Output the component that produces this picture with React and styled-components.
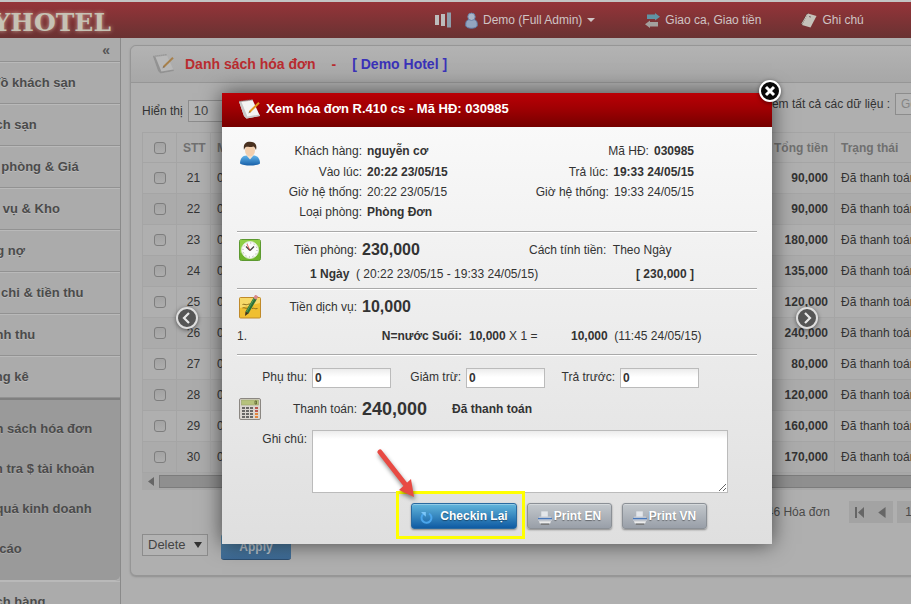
import styled, { createGlobalStyle, css } from 'styled-components';

const GlobalStyle = createGlobalStyle`
  * {
    box-sizing: border-box;
  }
  body {
    margin: 0;
    background: #afafaf;
    color: #333;
    font: 12px/20px "Liberation Sans", Arial, sans-serif;
    overflow: hidden;
  }
  button, input, select, textarea {
    font: inherit;
    color: inherit;
  }
`;

/* ---------- page ---------- */

const Viewport = styled.div`
  position: relative;
  min-height: 100vh;
  overflow: hidden;
`;

// the admin page is wider than the window on both sides
const Shell = styled.div`
  margin: 0 -100px 0 -40px;
`;

const TopBar = styled.header`
  display: flex;
  align-items: center;
  height: 38px;
  border-top: 2px solid #c4c4c4;
  background: linear-gradient(#953439, #693232);
  color: #cfc4c4;
`;

const Logo = styled.div`
  display: flex;
  justify-content: flex-end;
  width: 151px;
  font: bold 25px/34px "DejaVu Serif", serif;
  color: #c6c2b4;
  text-shadow: 0 0 4px #c9a99a;
  padding-top: 6px;
`;

const TopNav = styled.nav`
  display: flex;
  align-items: center;
  margin-left: 324px;
`;

const TopLink = styled.a`
  display: flex;
  align-items: center;
  gap: 5px;
  margin-right: ${(props) => props.$gap || 0}px;
  color: inherit;
  text-decoration: none;
`;

const Columns = styled.div`
  display: flex;
  align-items: stretch;
`;

const Sidebar = styled.aside`
  flex: none;
  width: 161px;
  border-right: 1px solid #8a8a8a;
  background: #ababab;
`;

const Collapse = styled.button`
  display: block;
  width: 100%;
  height: 24px;
  padding: 0 10px 0 0;
  border: 0;
  border-bottom: 1px solid #929292;
  background: none;
  text-align: right;
  font-size: 14px;
  font-weight: bold;
  color: #555;
`;

const menuText = css`
  display: block;
  padding-left: 11px;
  font-size: 13px;
  font-weight: bold;
  color: #4b4b4b;
  text-decoration: none;
  white-space: nowrap;
  text-shadow: 0 1px 0 #bcbcbc;
`;

const MenuItem = styled.a`
  ${menuText}
  height: 42px;
  line-height: 40px;
  border-top: 1px solid #b9b9b9;
  border-bottom: 1px solid #929292;
`;

const SubMenu = styled.div`
  padding: 9px 0 11px;
  border-top: 2px solid #808080;
  border-bottom: 1px solid #b9b9b9;
  border-radius: 0 0 5px 0;
  background: #9a9a9a;
`;

const SubItem = styled.a`
  ${menuText}
  line-height: 40px;
  text-shadow: 0 1px 0 #aaa;
`;

const Main = styled.main`
  flex: 1;
  padding: 7px 10px 29px 9px;
`;

const Panel = styled.section`
  border: 1px solid #969696;
  border-radius: 6px;
  box-shadow: 0 1px 2px #8f8f8f;
  background: #afafaf;
`;

const PanelHead = styled.div`
  display: flex;
  align-items: center;
  height: 37px;
  padding-left: 21px;
  border-bottom: 1px solid #969696;
  border-radius: 6px 6px 0 0;
  background: linear-gradient(#b3b3b3, #a7a7a7);
`;

const PanelTitle = styled.h1`
  display: flex;
  gap: 16px;
  margin: 0 0 0 10px;
  font-size: 14px;
  color: #b92c30;

  b {
    color: #3a32b8;
  }
`;

const PanelBody = styled.div`
  padding: 11px 11px 15px;
`;

const Toolbar = styled.div`
  display: flex;
  justify-content: space-between;
  height: 38px;
`;

const ToolGroup = styled.label`
  display: flex;
  align-items: center;
  gap: 5px;
  height: ${(props) => props.$height}px;
`;

const SelectWrap = styled.span`
  position: relative;
  display: inline-block;

  svg {
    position: absolute;
    right: 6px;
    top: 7px;
    pointer-events: none;
  }
`;

const Select = styled.select`
  appearance: none;
  width: ${(props) => props.$width}px;
  height: 22px;
  padding: 0 5px;
  border: 1px solid #8c8c8c;
  border-radius: 0;
  background: #b3b3b3;
  color: #444;
  font-size: 13px;
`;

const SearchInput = styled.input`
  width: 94px;
  height: 22px;
  padding: 0 5px;
  border: 1px solid #8c8c8c;
  background: #b3b3b3;

  &::placeholder {
    color: #858585;
  }
`;

const InvoiceTable = styled.table`
  width: 100%;
  table-layout: fixed;
  border-collapse: collapse;
  border: 1px solid #959595;

  th, td {
    height: 31px;
    padding: 0 6px;
    border: 1px solid #a5a5a5;
    text-align: left;
    white-space: nowrap;
    overflow: hidden;
  }
  th {
    height: 30px;
    color: #707070;
  }
  tbody tr:nth-child(even) {
    background: #ababab;
  }
`;

const Col = styled.col`
  width: ${(props) => props.$width}px;
`;

const Cell = styled.td`
  && {
    text-align: ${(props) => props.$align || 'left'};
    font-weight: ${(props) => (props.$bold ? 'bold' : 'inherit')};
  }
`;

const Tick = styled.input.attrs({ type: 'checkbox' })`
  appearance: none;
  display: block;
  width: 12px;
  height: 12px;
  margin: 0 auto;
  border: 1px solid #7e7e7e;
  border-radius: 3px;
  background: linear-gradient(#a3a3a3, #adadad);
`;

const ScrollTrack = styled.div`
  display: flex;
  align-items: center;
  gap: 3px;
  height: 17px;
  padding-left: 5px;
  background: #a8a8a8;
`;

const ScrollThumb = styled.div`
  flex: 1;
  height: 13px;
  border: 1px solid #7c7c7c;
  background: #8f8f8f;
`;

const Pager = styled.div`
  display: flex;
  justify-content: flex-end;
  align-items: center;
  gap: 4px;
  padding-top: 11px;
  color: #4a4a4a;
`;

const PagerInfo = styled.span`
  margin-right: 15px;
`;

const PagerGroup = styled.div`
  display: flex;
  width: ${(props) => props.$width}px;
  height: 22px;
  background: #a3a3a3;
`;

const PagerButton = styled.button`
  display: flex;
  align-items: center;
  justify-content: center;
  flex: 1;
  padding: 0;
  border: 0;
  background: none;
`;

const BulkActions = styled.div`
  display: flex;
  gap: 13px;
  padding-top: 11px;
`;

const ApplyButton = styled.button`
  width: 70px;
  height: 26px;
  border: 0;
  border-bottom: 1px solid #2d4f70;
  border-radius: 3px;
  background: linear-gradient(#5687a6, #3d6a96);
  color: #b9c3cc;
  font-weight: bold;
`;

/* ---------- dialog ---------- */

const Overlay = styled.div`
  position: absolute;
  inset: 0;
  display: flex;
  justify-content: center;
  align-items: flex-start;
  padding: 93px 0 0 83px;
`;

const Dialog = styled.div`
  position: relative;
  width: 550px;
  box-shadow: 0 0 20px rgba(0, 0, 0, 0.6);
  background: linear-gradient(#fbfbfb, #dfdfdf);
`;

const DialogHead = styled.div`
  display: flex;
  align-items: center;
  gap: 5px;
  height: 34px;
  padding: 0 16px 2px;
  background: linear-gradient(#ba0006, #a00003 45%, #760000);
  color: #fff;
`;

const DialogTitle = styled.h2`
  margin: 0;
  font-size: 13px;
`;

const RoundButton = styled.button`
  position: absolute;
  width: 24px;
  height: 24px;
  padding: 0;
  border: 0;
  border-radius: 50%;
  background: none;
  filter: drop-shadow(0 1px 2px rgba(0, 0, 0, 0.5));
  ${(props) => props.$at}

  svg {
    display: block;
  }
`;

const Form = styled.form`
  padding: 0 15px 15px;
`;

const Block = styled.div`
  padding: ${(props) => props.$pad};
  border-bottom: 1px solid #a9a9a9;
  box-shadow: 0 1px 0 #fff;
  margin-bottom: 1px;
`;

const Guest = styled.div`
  display: grid;
  grid-template-columns: 26px 1fr auto;
  padding-right: 63px;
`;

const Details = styled.dl`
  margin: 0;
`;

const Detail = styled.div`
  display: flex;
  gap: 5px;
  ${(props) => props.$right && 'justify-content: flex-end;'}

  &:first-child {
    padding-bottom: 1px;
  }
  dt {
    width: ${(props) => (props.$right ? 'auto' : '99px')};
    text-align: right;
  }
  dd {
    margin: 0;
    font-weight: ${(props) => (props.$plain ? 'normal' : 'bold')};
  }
`;

const IconSlot = styled.span`
  flex: none;
  width: 26px;
  padding-left: 2px;

  svg {
    display: block;
  }
`;

const Row = styled.div`
  display: flex;
  align-items: center;
  height: ${(props) => props.$height || 22}px;
  padding-left: ${(props) => props.$indent || 0}px;
  padding-right: ${(props) => props.$inset || 0}px;
  margin-top: ${(props) => props.$top || 0}px;
  white-space: pre;
`;

const RowLabel = styled.span`
  width: 94px;
  margin-right: 5px;
  text-align: right;
`;

const Amount = styled.strong`
  flex: ${(props) => (props.$fit ? 'none' : 1)};
  font-size: ${(props) => props.$size || 16}px;
`;

const Status = styled.strong`
  margin-left: 25px;
`;

const Method = styled.span`
  width: 228px;
`;

const Push = styled.strong`
  margin-left: auto;
`;

const ServiceRow = styled.div`
  display: grid;
  grid-template-columns: 20px 205px 109px 1fr;
  padding: 6px 0 1px;
  white-space: pre;
`;

const ServiceName = styled.strong`
  text-align: right;
`;

const ServiceQty = styled.span`
  padding-left: 7px;
`;

const Fees = styled.div`
  display: flex;
  padding-top: 12px;
`;

const Field = styled.label`
  display: grid;
  grid-template-columns: 70px ${(props) => props.$width}px;
  column-gap: 5px;
  line-height: 18px;
  margin-top: ${(props) => props.$top || 0}px;

  span {
    text-align: right;
  }
`;

const inputLook = css`
  border: 1px solid #bbb;
  border-radius: 0;
  background: linear-gradient(#ececec, #fff 8px);
`;

const MoneyInput = styled.input`
  ${inputLook}
  width: 100%;
  height: 20px;
  padding: 0 2px;
  font-weight: bold;
`;

const Note = styled.textarea`
  ${inputLook}
  display: block;
  width: 100%;
  height: 63px;
`;

const Actions = styled.div`
  display: flex;
  gap: 10px;
  padding: 10px 50px 0 0;
  justify-content: flex-end;
`;

const ActionButton = styled.button`
  display: flex;
  align-items: center;
  justify-content: center;
  gap: ${(props) => (props.$primary ? 7 : 2)}px;
  width: ${(props) => (props.$primary ? 106 : 85)}px;
  height: 26px;
  padding: 0;
  border: 1px solid ${(props) => (props.$primary ? '#2a6aa0' : '#8b9096')};
  border-radius: 3px;
  background: ${(props) =>
    props.$primary ? 'linear-gradient(#62b6dc, #0f5ba3)' : 'linear-gradient(#c3c8cc, #999fa8)'};
  box-shadow: 0 1px 2px rgba(0, 0, 0, 0.4), inset 0 1px 0 rgba(255, 255, 255, 0.3);
  color: #fff;
  font-weight: bold;
  white-space: nowrap;
  text-shadow: 0 1px 1px rgba(0, 0, 0, 0.4);
`;

const Highlight = styled.div`
  position: absolute;
  left: 174px;
  bottom: 5px;
  width: 129px;
  height: 48px;
  border: 3px solid #ff0;
  pointer-events: none;
`;

const Pointer = styled.svg`
  position: absolute;
  left: 150px;
  bottom: 45px;
  pointer-events: none;
  filter: drop-shadow(1px 3px 2px rgba(0, 0, 0, 0.45));
`;

/* ---------- icons ---------- */

const NoteIcon = ({ dim }) => (
  <svg width="23" height="20" viewBox="0 0 23 20" opacity={dim ? 0.75 : 1} aria-hidden="true">
    <path d="M1 2.500 14.500.8 22 17 8.500 19.500 6 17z" fill={dim ? '#bdbdbd' : '#f4f4f4'} />
    <path d="M1 2.500 6 17l2.500 2.500L22 17l-.6-1.500-12 2L3.500 3z" fill={dim ? '#8a8a8a' : '#c8c8c8'} />
    <path d="M1.500 2.500 14.500.8" stroke="#777" strokeWidth="1.500" strokeDasharray="1 1" />
    <path d="M21 3.800 11.500 13" stroke={dim ? '#a5712a' : '#e39a1d'} strokeWidth="2" />
    <path d="m11.900 12.200-1.900 2.400 2.600-1.500z" fill="#5a4630" />
  </svg>
);

const GuestIcon = () => (
  <svg width="22" height="25" viewBox="0 0 22 25" aria-hidden="true">
    <defs>
      <linearGradient id="shirt" x1="0" y1="0" x2="0" y2="1">
        <stop offset="0" stopColor="#62b4ea" />
        <stop offset="1" stopColor="#175fa8" />
      </linearGradient>
    </defs>
    <path d="M1 22.500c0-5 2.500-8 6.500-8h7c4 0 6.500 3 6.500 8-4 2.800-16 2.800-20 0z" fill="url(#shirt)" />
    <path d="M7.500 14.500 11 18.500l3.500-4-1-2h-5z" fill="#f6e2cf" />
    <ellipse cx="11" cy="9.500" rx="5" ry="6" fill="#f3cfae" />
    <path d="M5 9C4 3.500 6.500.8 11 .8s7.500 2.500 6 8.200c-.8-2-1.500-3-2.500-3.600C11 6.500 8 5.500 7 6 6 6.500 5.500 7.500 5 9z" fill="#49301f" />
  </svg>
);

const ClockIcon = () => (
  <svg width="22" height="22" viewBox="0 0 22 22" aria-hidden="true">
    <rect x=".5" y=".5" width="21" height="21" rx="2" fill="#6fb52c" stroke="#5c9930" />
    <path d="M1 1h20v7L1 14z" fill="#8ecf45" />
    <circle cx="11" cy="11" r="8.500" fill="#fcfcfc" stroke="#dbe8cd" />
    <circle cx="11" cy="11" r="7" fill="none" stroke="#999" strokeWidth="1" strokeDasharray="1 2.665" />
    <path d="m11 11.500-4-4M11 11.500l4-4" stroke="#444" strokeWidth="1.300" />
    <path d="M11 11.500 8 5" stroke="#d33" strokeWidth=".8" />
  </svg>
);

const MemoIcon = () => (
  <svg width="22" height="24" viewBox="0 0 22 24" aria-hidden="true">
    <rect x=".5" y="2.500" width="21" height="20.500" rx="1" fill="#f0bf30" stroke="#c08a2a" />
    <path d="M1 3h20v5L1 13z" fill="#f7d968" />
    <path d="M3.500 9.500c2-1 3 1 5 0s3 0 4 0M3.500 13c2-1 3 1 5 0M13 13.500c2-1 3 1 5.500 0" stroke="#8d6d1c" fill="none" />
    <path d="M16.500 3 8 17.500" stroke="#2c7039" strokeWidth="3.500" />
    <path d="M15.500 3 7.500 17" stroke="#57a055" strokeWidth="1" />
    <path d="m17.800.5-2 3.300" stroke="#d98a8a" strokeWidth="3.500" />
    <path d="M6.500 16.500 6 21l3.600-2.700z" fill="#3c3220" />
  </svg>
);

const CalculatorIcon = () => (
  <svg width="22" height="22" viewBox="0 0 22 22" aria-hidden="true">
    <rect x=".5" y=".5" width="21" height="21" rx="1.500" fill="#dbd6d0" stroke="#8b8782" />
    <rect x="2.500" y="2" width="17" height="5" fill="#b6c27c" stroke="#99a269" strokeWidth=".6" />
    <path d="M16 3h1.500v3H16z" fill="none" stroke="#58612f" strokeWidth=".8" />
    {[9, 12, 15, 18].map((y) =>
      [3, 7, 11, 16].map((x) => (
        <rect
          key={`${x}-${y}`}
          x={x}
          y={y}
          width="3"
          height="2"
          fill={x === 16 ? (y > 14 ? '#e3843c' : '#b8574f') : '#6a6866'}
        />
      ))
    )}
  </svg>
);

const BarsIcon = () => (
  <svg width="17" height="16" viewBox="0 0 17 16" aria-hidden="true">
    <path d="M0 3h4v10H0zM6 2h4v12H6z" fill="#bcbcbc" />
    <path d="M12 .5h4v15h-4z" fill="#8f9eab" />
  </svg>
);

const PersonIcon = () => (
  <svg width="13" height="17" viewBox="0 0 13 17" aria-hidden="true">
    <path d="M.8 14C.3 10 1.500 8 4 7.500h5c2.500.5 3.700 2.500 3.200 6.500-1.700 3-9.700 3-11.400 0z" fill="#93a5c0" stroke="#5f7ba6" />
    <circle cx="6.500" cy="4.800" r="3.700" fill="#a9b5c7" stroke="#6b83a9" />
  </svg>
);

const SwapIcon = () => (
  <svg width="15" height="15" viewBox="0 0 15 15" aria-hidden="true">
    <path d="M2 1.500h8V0l5 3.800-5 3.700V6H2z" fill="#6093a4" />
    <path d="M13 9H5V7.500l-5 3.700L5 15v-1.500h8z" fill="#a3a09d" />
  </svg>
);

const BookIcon = () => (
  <svg width="16" height="15" viewBox="0 0 16 15" aria-hidden="true">
    <path d="M6 0 0 10.500 1.500 13 8 2z" fill="#5d3d37" />
    <path d="m7 .5 8.500 2.500-6 11.500L1 12z" fill="#c5c2ba" />
    <path d="M6.500 1 .8 11" stroke="#c5c2ba" />
    <path d="m8 3.500 2 .6" stroke="#766" />
  </svg>
);

const Triangle = ({ left, size = 9, color = '#333' }) => (
  <svg width={size} height={size} viewBox="0 0 9 9" aria-hidden="true">
    <path d={left ? 'M7 0v9L1 4.500z' : 'M0 1h9L4.500 8z'} fill={color} />
  </svg>
);

const CaretIcon = () => (
  <svg width="8" height="4" viewBox="0 0 8 4" aria-hidden="true">
    <path d="M0 0h8L4 4z" fill="#cfc4c4" />
  </svg>
);

const FirstIcon = () => (
  <svg width="10" height="11" viewBox="0 0 10 11" aria-hidden="true">
    <path d="M0 0h2v11H0zM9 0v11L3 5.500z" fill="#666" />
  </svg>
);

const CloseIcon = () => (
  <svg width="24" height="24" viewBox="0 0 24 24" aria-hidden="true">
    <circle cx="12" cy="12" r="10" fill="#080808" stroke="#fff" strokeWidth="2" />
    <path d="m8 8 8 8m0-8-8 8" stroke="#fff" strokeWidth="3" />
  </svg>
);

const ChevronIcon = ({ next }) => (
  <svg width="24" height="24" viewBox="0 0 24 24" aria-hidden="true">
    <circle cx="12" cy="12" r="10" fill="#555" stroke="#dedede" strokeWidth="2" />
    <path d={next ? 'm10 7 5 5-5 5' : 'm14 7-5 5 5 5'} fill="none" stroke="#e8e8e8" strokeWidth="2.200" />
  </svg>
);

const ReloadIcon = () => (
  <svg width="13" height="17" viewBox="1 -2 13 17" aria-hidden="true">
    <path d="M10 3.500a5 5 0 1 1-5.500.3" fill="none" stroke="#4ba6ec" strokeWidth="2" />
    <path d="M2 2h4.800v4.800z" fill="#7cc6f8" />
  </svg>
);

const PrinterIcon = () => (
  <svg width="14" height="19" viewBox="0 -4 15 19" aria-hidden="true">
    <path d="M3.500 0h7v6h-7z" fill="#e4e7eb" />
    <path d="M1.500 5.500h12L15 8v2H0V8z" fill="#c9ced6" />
    <path d="M0 7h15v1.500H0z" fill="#4a79bb" />
    <path d="M1 10.500h13L13 13H2z" fill="#ececec" />
    <path d="M3 13h9v1.500H3z" fill="#777" />
  </svg>
);

/* ---------- data ---------- */

const menu = [
  'Sơ đồ khách sạn',
  'Khách sạn',
  'Loại phòng & Giá',
  'Dịch vụ & Kho',
  'Công nợ',
  'Tiền chi & tiền thu',
  'Doanh thu',
  'Thống kê',
];

const subMenu = ['Danh sách hóa đơn', 'Kiểm tra $ tài khoản', 'Kết quả kinh doanh', 'Báo cáo'];

const totals = [
  '90,000', '90,000', '180,000', '135,000', '120,000',
  '240,000', '80,000', '120,000', '160,000', '170,000',
];

const invoices = totals.map((total, i) => ({ stt: 21 + i, code: `0${30993 - i}`, total }));

const fees = ['Phụ thu:', 'Giảm trừ:', 'Trả trước:'];

/* ---------- parts ---------- */

const Invoices = () => (
  <Panel>
    <PanelHead>
      <NoteIcon dim />
      <PanelTitle>
        <span>Danh sách hóa đơn</span>
        <span>-</span>
        <b>[ Demo Hotel ]</b>
      </PanelTitle>
    </PanelHead>
    <PanelBody>
      <Toolbar>
        <ToolGroup $height={34}>
          Hiển thị
          <SelectWrap>
            <Select $width={60} defaultValue="10">
              <option>10</option>
            </Select>
            <Triangle />
          </SelectWrap>
        </ToolGroup>
        <ToolGroup $height={20}>
          Xem tất cả các dữ liệu :
          <SearchInput placeholder="Gõ từ khóa" />
        </ToolGroup>
      </Toolbar>
      <InvoiceTable>
        <colgroup>
          <Col $width={34} />
          <Col $width={34} />
          <col />
          <Col $width={100} />
          <Col $width={154} />
        </colgroup>
        <thead>
          <tr>
            <th><Tick aria-label="Tất cả" /></th>
            <th>STT</th>
            <th>Mã HĐ</th>
            <Cell as="th" $align="right" $bold>Tổng tiền</Cell>
            <th>Trạng thái</th>
          </tr>
        </thead>
        <tbody>
          {invoices.map((invoice) => (
            <tr key={invoice.stt}>
              <td><Tick aria-label={`Hóa đơn ${invoice.code}`} /></td>
              <Cell $align="center">{invoice.stt}</Cell>
              <td>{invoice.code}</td>
              <Cell $align="right" $bold>{invoice.total}</Cell>
              <td>Đã thanh toán</td>
            </tr>
          ))}
        </tbody>
      </InvoiceTable>
      <ScrollTrack>
        <Triangle left color="#666" />
        <ScrollThumb />
      </ScrollTrack>
      <Pager>
        <PagerInfo>21 - 30 / 46 Hóa đơn</PagerInfo>
        <PagerGroup $width={44}>
          <PagerButton aria-label="Trang đầu"><FirstIcon /></PagerButton>
          <PagerButton aria-label="Trang trước"><Triangle left size={11} color="#666" /></PagerButton>
        </PagerGroup>
        <PagerGroup $width={92}>
          <PagerButton>1</PagerButton>
          <PagerButton>2</PagerButton>
          <PagerButton>3</PagerButton>
          <PagerButton>4</PagerButton>
        </PagerGroup>
      </Pager>
      <BulkActions>
        <SelectWrap>
          <Select $width={66} defaultValue="Delete" aria-label="Thao tác">
            <option>Delete</option>
          </Select>
          <Triangle size={8} />
        </SelectWrap>
        <ApplyButton>Apply</ApplyButton>
      </BulkActions>
    </PanelBody>
  </Panel>
);

const InvoiceDialog = () => (
  <Dialog role="dialog" aria-labelledby="dialog-title">
    <DialogHead>
      <NoteIcon />
      <DialogTitle id="dialog-title">Xem hóa đơn R.410 cs - Mã HĐ: 030985</DialogTitle>
    </DialogHead>
    <Form>
      <Block $pad="14px 0 9px">
        <Guest>
          <IconSlot><GuestIcon /></IconSlot>
          <Details>
            <Detail><dt>Khách hàng:</dt><dd>nguyễn cơ</dd></Detail>
            <Detail><dt>Vào lúc:</dt><dd>20:22 23/05/15</dd></Detail>
            <Detail $plain><dt>Giờ hệ thống:</dt><dd>20:22 23/05/15</dd></Detail>
            <Detail><dt>Loại phòng:</dt><dd>Phòng Đơn</dd></Detail>
          </Details>
          <Details>
            <Detail $right><dt>Mã HĐ:</dt><dd>030985</dd></Detail>
            <Detail $right><dt>Trả lúc:</dt><dd>19:33 24/05/15</dd></Detail>
            <Detail $right $plain><dt>Giờ hệ thống:</dt><dd>19:33 24/05/15</dd></Detail>
          </Details>
        </Guest>
      </Block>

      <Block $pad="4px 0 3px">
        <Row $height={26}>
          <IconSlot><ClockIcon /></IconSlot>
          <RowLabel>Tiền phòng:</RowLabel>
          <Amount>230,000</Amount>
          <Method>{'Cách tính tiền:  Theo Ngày'}</Method>
        </Row>
        <Row $indent={73} $inset={63}>
          <strong>1 Ngày</strong>
          {'  ( 20:22 23/05/15 - 19:33 24/05/15)'}
          <Push>[ 230,000 ]</Push>
        </Row>
      </Block>

      <Block $pad="4px 0 7px">
        <Row $height={26}>
          <IconSlot><MemoIcon /></IconSlot>
          <RowLabel>Tiền dịch vụ:</RowLabel>
          <Amount>10,000</Amount>
        </Row>
        <ServiceRow>
          <span>1.</span>
          <ServiceName>N=nước Suối:</ServiceName>
          <ServiceQty><strong>10,000</strong> X 1 =</ServiceQty>
          <span><strong>10,000</strong>{'  (11:45 24/05/15)'}</span>
        </ServiceRow>
      </Block>

      <Fees>
        {fees.map((fee) => (
          <Field key={fee} $width={79}>
            <span>{fee}</span>
            <MoneyInput defaultValue="0" />
          </Field>
        ))}
      </Fees>
      <Row $height={26} $top={8}>
        <IconSlot><CalculatorIcon /></IconSlot>
        <RowLabel>Thanh toán:</RowLabel>
        <Amount $size={18} $fit>240,000</Amount>
        <Status>Đã thanh toán</Status>
      </Row>
      <Field $width={416} $top={8}>
        <span>Ghi chú:</span>
        <Note />
      </Field>
      <Actions>
        <ActionButton type="button" $primary><ReloadIcon />Checkin Lại</ActionButton>
        <ActionButton type="button"><PrinterIcon />Print EN</ActionButton>
        <ActionButton type="button"><PrinterIcon />Print VN</ActionButton>
      </Actions>
    </Form>

    <Highlight />
    <Pointer width="50" height="56" viewBox="0 0 50 56" aria-hidden="true">
      <path d="m8 9 25 32" stroke="#e84a43" strokeWidth="5" strokeLinecap="round" />
      <path d="m42 54-15-7 12-11z" fill="#e84a43" />
    </Pointer>
    <RoundButton aria-label="Đóng" $at="top: -14px; right: -10px;"><CloseIcon /></RoundButton>
    <RoundButton aria-label="Trước" $at="top: calc(50% - 13px); left: -47px;"><ChevronIcon /></RoundButton>
    <RoundButton aria-label="Sau" $at="top: calc(50% - 13px); right: -47px;"><ChevronIcon next /></RoundButton>
  </Dialog>
);

export default function App() {
  return (
    <Viewport>
      <GlobalStyle />
      <Shell>
        <TopBar>
          <Logo>SKYHOTEL</Logo>
          <TopNav>
            <TopLink href="#" $gap={13} aria-label="Báo cáo"><BarsIcon /></TopLink>
            <TopLink href="#" $gap={50}>
              <PersonIcon />
              Demo (Full Admin)
              <CaretIcon />
            </TopLink>
            <TopLink href="#" $gap={40}><SwapIcon />Giao ca, Giao tiền</TopLink>
            <TopLink href="#"><BookIcon />Ghi chú</TopLink>
          </TopNav>
        </TopBar>
        <Columns>
          <Sidebar>
            <Collapse aria-label="Thu gọn">«</Collapse>
            {menu.map((item) => (
              <MenuItem key={item} href="#">{item}</MenuItem>
            ))}
            <SubMenu>
              {subMenu.map((item) => (
                <SubItem key={item} href="#">{item}</SubItem>
              ))}
            </SubMenu>
            <MenuItem href="#">Khách hàng</MenuItem>
          </Sidebar>
          <Main>
            <Invoices />
          </Main>
        </Columns>
      </Shell>
      <Overlay>
        <InvoiceDialog />
      </Overlay>
    </Viewport>
  );
}
